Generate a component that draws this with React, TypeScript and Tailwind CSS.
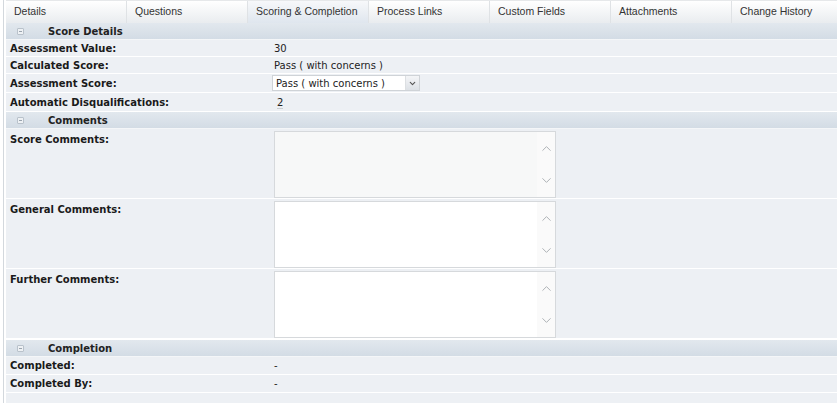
import { ChevronDown, ChevronUp } from 'lucide-react';

const tabs = ['Details', 'Questions', 'Scoring & Completion', 'Process Links', 'Custom Fields', 'Attachments', 'Change History'];

function SectionHeader({ title }: { title: string }) {
  return (
    <div className="flex h-[17px] items-center bg-gradient-to-b from-[#e2e8ee] to-[#d3dce5] border-b border-[#f4f6f8]">
      <span className="ml-[11px] flex h-[7px] w-[7px] items-center justify-center rounded-[1px] border border-[#b9c2cb] bg-[#eef1f4]">
        <span className="h-px w-[3px] bg-[#9aa4ae]" />
      </span>
      <span className="ml-[24px] text-[10px] font-bold text-[#222]">{title}</span>
    </div>
  );
}

function Row({ label, children, h = 'h-[17px]' }: { label?: string; children?: React.ReactNode; h?: string }) {
  return (
    <div className={`flex ${h} items-center border-b border-white bg-[#edf0f4]`}>
      <div className="w-[268px] shrink-0 pl-[4px] text-[10px] font-bold text-[#1a1a1a]">{label}</div>
      <div className="text-[10px] text-[#222]">{children}</div>
    </div>
  );
}

function CommentBox({ label, tint }: { label: string; tint?: boolean }) {
  return (
    <div className="flex h-[70px] border-b border-white bg-[#edf0f4]">
      <div className="w-[268px] shrink-0 pl-[4px] pt-[3px] text-[10px] font-bold text-[#1a1a1a]">{label}</div>
      <div
        className={`mt-[2px] flex h-[67px] w-[282px] border border-[#d6d9dc] ${tint ? 'bg-[#f7f8f8]' : 'bg-white'}`}
      >
        <div className="flex-1" />
        <div className="flex w-[18px] flex-col items-center justify-between bg-[#fafafa] py-[9px] text-[#aeb2b6]">
          <ChevronUp size={15} strokeWidth={1.6} />
          <ChevronDown size={15} strokeWidth={1.6} />
        </div>
      </div>
    </div>
  );
}

export default function App() {
  return (
    <div className="h-[403px] w-[837px] overflow-hidden bg-white" style={{ fontFamily: '"DejaVu Sans", Verdana, sans-serif' }}>
      <div className="ml-[3px] border-l border-[#d3d8dd] pl-[2px]">
        {/* tab strip */}
        <div className="flex h-[23px] border-t border-[#e6e8ea] bg-gradient-to-b from-white to-[#e9ecef]">
          {tabs.map((t) => (
            <div
              key={t}
              className={`flex w-[121px] shrink-0 items-center border-r border-[#dfe2e5] pl-[8px] text-[10.5px] text-[#333] ${
                t === 'Scoring & Completion' ? 'bg-gradient-to-b from-[#f7f8fa] to-[#dfe6ee]' : ''
              }`}
              style={{ fontFamily: '"Liberation Sans", Arial, sans-serif' }}
            >
              {t}
            </div>
          ))}
        </div>

        <SectionHeader title="Score Details" />
        <Row label="Assessment Value:">30</Row>
        <Row label="Calculated Score:">Pass ( with concerns )</Row>
        <Row label="Assessment Score:" h="h-[19px]">
          <div className="-ml-[2px] flex h-[16px] w-[148px] items-center border border-[#cfd3d7] bg-white">
            <span className="flex-1 pl-[3px]">Pass ( with concerns )</span>
            <span className="flex h-full w-[14px] items-center justify-center border-l border-[#dcdfe2] bg-gradient-to-b from-[#f4f5f7] to-[#dde1e6]">
              <ChevronDown size={9} strokeWidth={3} className="text-[#555]" />
            </span>
          </div>
        </Row>
        <Row label="Automatic Disqualifications:" h="h-[19px]">
          <span className="ml-[3px] border-b border-[#c8ccd0]">2</span>
        </Row>

        <SectionHeader title="Comments" />
        <CommentBox label="Score Comments:" tint />
        <CommentBox label="General Comments:" />
        <CommentBox label="Further Comments:" />

        <div className="h-px" />
        <SectionHeader title="Completion" />
        <Row label="Completed:" h="h-[18px]">-</Row>
        <Row label="Completed By:" h="h-[18px]">-</Row>
        <Row h="h-[18px]" />
      </div>
    </div>
  );
}
